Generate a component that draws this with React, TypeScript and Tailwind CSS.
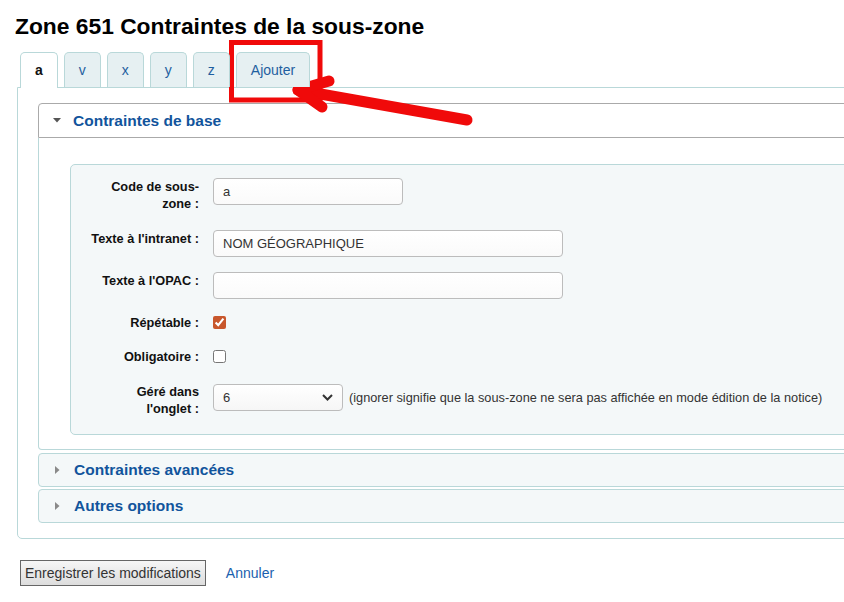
import { useState } from 'react';

const tabs = ['a', 'v', 'x', 'y', 'z', 'Ajouter'];

function Row({ label, top, center, children }: { label: React.ReactNode; top: string; center?: boolean; children: React.ReactNode }) {
  return (
    <div className={`flex ${center ? 'items-center' : 'items-start'} ${top}`}>
      <label className="ml-[13px] mr-[14px] w-[115px] shrink-0 text-right text-[12.75px] leading-[17px] font-bold text-[#111]">
        {label}
      </label>
      {children}
    </div>
  );
}

function TextInput({ value, width }: { value: string; width: string }) {
  return (
    <input
      readOnly
      value={value}
      className={`${width} h-[27px] rounded-[4px] border border-[#bcbcbc] bg-gradient-to-b from-white to-[#fafafa] pl-[9px] text-[13px] text-[#333] outline-none`}
    />
  );
}

function Caret({ open }: { open: boolean }) {
  return open ? (
    <svg width="8" height="5" viewBox="0 0 8 5" className="ml-[14px] mr-[12px]">
      <path d="M0 0 L8 0 L4 4.5 Z" fill="#555" />
    </svg>
  ) : (
    <svg width="5" height="8" viewBox="0 0 5 8" className="ml-[16px] mr-[14px]">
      <path d="M0 0 L4.5 4 L0 8 Z" fill="#8a8a8a" />
    </svg>
  );
}

export default function App() {
  const [active, setActive] = useState('a');
  const [repeatable, setRepeatable] = useState(true);
  const [mandatory, setMandatory] = useState(false);

  return (
    <div className="relative h-[602px] w-[844px] overflow-hidden bg-white font-['Liberation_Sans',Arial,sans-serif] text-[#333]">
      <div className="w-[940px] pl-[15px]">
        <h1 className="pt-[13px] text-[22.8px] leading-[26px] font-bold text-black">
          Zone 651 Contraintes de la sous-zone
        </h1>

        <div className="ml-[2px] mt-[13px]">
          {/* tabs */}
          <ul className="relative z-10 flex h-[35px] items-start gap-[6px] pl-[3px]">
            {tabs.map((t) => (
              <li
                key={t}
                onClick={() => setActive(t)}
                className={`flex cursor-pointer items-center rounded-t-[5px] border border-b-0 border-[#b9d8d9] px-[14px] text-[14px] ${
                  active === t
                    ? 'h-[36px] bg-white font-bold text-[#111]'
                    : 'h-[35px] bg-[#e6f0f2] text-[#1f5fa0]'
                }`}
              >
                {t}
              </li>
            ))}
          </ul>

          {/* tab panel */}
          <div className="rounded-b-[5px] border border-[#b9d8d9] pb-[15px] pl-[20px] pt-[15px]">
            <div className="flex h-[35px] items-center rounded-t-[4px] border border-[#aaaaaa] bg-white">
              <Caret open />
              <span className="text-[15.5px] font-bold text-[#11549c]">Contraintes de base</span>
            </div>
            <div className="rounded-b-[4px] border border-t-0 border-[#b9d8d9] bg-white pb-[14px] pl-[31px] pt-[26px]">
              <div className="rounded-[5px] border border-[#b9d8d9] bg-[#f4f8f9] pb-[17px] pt-[13px]">
                <Row label={<>Code de sous-<br />zone :</>} top="mt-0">
                  <TextInput value="a" width="w-[190px]" />
                </Row>
                <Row label="Texte à l'intranet :" top="mt-[18px]">
                  <TextInput value="NOM GÉOGRAPHIQUE" width="w-[350px]" />
                </Row>
                <Row label="Texte à l'OPAC :" top="mt-[15px]">
                  <TextInput value="" width="w-[350px]" />
                </Row>
                <Row label="Répétable :" top="mt-[15px]" center>
                  <input
                    type="checkbox"
                    checked={repeatable}
                    onChange={() => setRepeatable(!repeatable)}
                    className="m-0 h-[13px] w-[13px] accent-[#c8572c]"
                  />
                </Row>
                <Row label="Obligatoire :" top="mt-[17px]" center>
                  <input
                    type="checkbox"
                    checked={mandatory}
                    onChange={() => setMandatory(!mandatory)}
                    className="m-0 h-[13px] w-[13px] accent-[#c8572c]"
                  />
                </Row>
                <Row label={<>Géré dans<br />l'onglet :</>} top="mt-[18px]">
                  <div className="mt-[1px] flex items-center">
                    <div className="flex h-[27px] w-[130px] items-center justify-between rounded-[4px] border border-[#bcbcbc] bg-gradient-to-b from-white to-[#f6f6f6] pl-[9px] pr-[9px] text-[13px] text-[#333]">
                      <span>6</span>
                      <svg width="11" height="7" viewBox="0 0 11 7">
                        <path d="M1 1 L5.5 5.5 L10 1" fill="none" stroke="#333" strokeWidth="2" />
                      </svg>
                    </div>
                    <span className="ml-[6px] text-[12.75px] text-[#333]">
                      (ignorer signifie que la sous-zone ne sera pas affichée en mode édition de la notice)
                    </span>
                  </div>
                </Row>
              </div>
            </div>

            <div className="mt-[3px] flex h-[34px] items-center rounded-[4px] border border-[#b9d8d9] bg-[#f4f8f9]">
              <Caret open={false} />
              <span className="text-[15.5px] font-bold text-[#11549c]">Contraintes avancées</span>
            </div>
            <div className="mt-[2px] flex h-[34px] items-center rounded-[4px] border border-[#b9d8d9] bg-[#f4f8f9]">
              <Caret open={false} />
              <span className="text-[15.5px] font-bold text-[#11549c]">Autres options</span>
            </div>
          </div>
        </div>

        <div className="ml-[5px] mt-[21px] flex items-center">
          <button className="h-[26px] border border-[#666] bg-gradient-to-b from-[#f6f6f6] to-[#dddddd] px-[4px] text-[14px] text-[#333]">
            Enregistrer les modifications
          </button>
          <a href="#" className="ml-[20px] text-[14px] text-[#1b5fae]">
            Annuler
          </a>
        </div>
      </div>

      {/* annotation drawn over the page */}
      <svg className="pointer-events-none absolute left-0 top-0" width="844" height="602" viewBox="0 0 844 602">
        <rect x="231.5" y="42.5" width="88.5" height="57.5" fill="none" stroke="#f00a0a" strokeWidth="5" />
        <path d="M467 120 L298 90" stroke="#f00a0a" strokeWidth="11" strokeLinecap="round" />
        <path d="M329 81 L298 90 L322 107" fill="none" stroke="#f00a0a" strokeWidth="11" strokeLinecap="round" strokeLinejoin="round" />
      </svg>
    </div>
  );
}
